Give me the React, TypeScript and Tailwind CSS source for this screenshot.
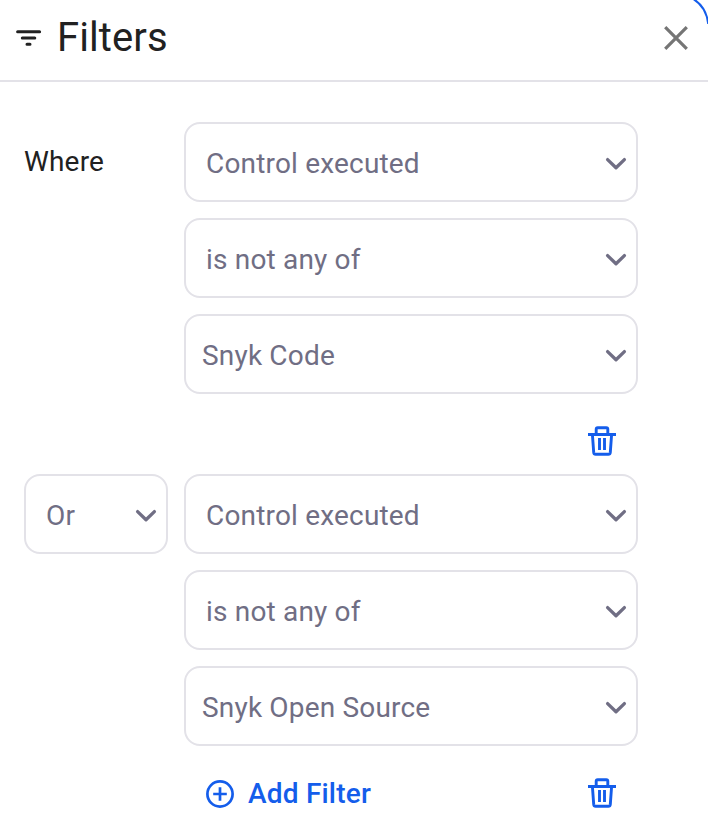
import React from "react";

function Chevron() {
  return (
    <svg width="24" height="16" viewBox="0 0 24 16" fill="none" className="shrink-0">
      <path d="M3.600 3.600 12 11.800l8.400-8.200" stroke="#706e84" strokeWidth="3.300" strokeLinecap="round" strokeLinejoin="round" />
    </svg>
  );
}

function Select({ label, tight = false }: { label: string; tight?: boolean }) {
  return (
    <div className={`flex h-20 w-full items-center justify-between rounded-2xl border-2 border-[#e3e2e8] bg-white pr-2 pt-1 ${tight ? "pl-4" : "pl-5"}`}>
      <span className="text-[28px] leading-8 tracking-[0.18px] text-[#706e84]">{label}</span>
      <Chevron />
    </div>
  );
}

function Trash() {
  return (
    <svg width="28" height="30" viewBox="0 0 28 30" fill="none" stroke="#145deb" strokeWidth="2.900" strokeLinejoin="round">
      <path d="M0 8.500h28M8.200 8V3.200q0-1.500 1.500-1.500h8.600q1.500 0 1.500 1.500V8M4.400 8.500l1.300 17.900q.2 1.900 2 1.900h12.600q1.800 0 2-1.900l1.300-17.900M11.500 12v12M16.500 12v12" />
    </svg>
  );
}

export default function App() {
  return (
    <main className="relative h-[830px] w-[708px] overflow-hidden bg-white font-['Roboto',sans-serif]">
      <svg className="absolute right-0 top-0" width="24" height="32" viewBox="0 0 24 32" fill="none">
        <path d="M9 -1.200Q22.500 7 24.200 24" stroke="#145deb" strokeWidth="2" />
      </svg>
      <header className="flex h-[82px] items-center justify-between border-b-2 border-[#e3e2e8] pb-1 pl-4 pr-5">
        <div className="flex items-center gap-[15px]">
          <svg width="26" height="18" viewBox="0 0 26 18" fill="none" stroke="#212121" strokeWidth="3" strokeLinecap="round"><path d="M1.600 2.700h22M6.300 9h12.500M11 15.200h3" /></svg>
          <h1 className="text-[40px] leading-[48px] tracking-[0.1px] text-[#212121]">Filters</h1>
        </div>
        <svg width="24" height="24" viewBox="0 0 24 24" stroke="#757575" strokeWidth="3.200"><path d="m1.200 1.200 21.600 21.600M22.800 1.200 1.200 22.800" /></svg>
      </header>
      <section className="grid grid-cols-[144px_454px] gap-x-4 pl-6 pt-10">
        <div className="pt-6 text-[28px] leading-8 tracking-[0.18px] text-[#212121]">Where</div>
        <div className="flex flex-col gap-4">
          <Select label="Control executed" />
          <Select label="is not any of" />
          <Select label="Snyk Code" tight />
        </div>
      </section>
      <div className="flex h-20 items-center justify-end pr-[92px] pt-3.5"><Trash /></div>
      <section className="grid grid-cols-[144px_454px] gap-x-4 pl-6">
        <div><Select label="Or" /></div>
        <div className="flex flex-col gap-4">
          <Select label="Control executed" />
          <Select label="is not any of" />
          <Select label="Snyk Open Source" tight />
        </div>
      </section>
      <footer className="flex h-[84px] items-start justify-between pl-[206px] pr-[92px] pt-[27px]">
        <button className="flex items-center gap-3.5 text-[28px] font-medium leading-[42px] tracking-[0.2px] text-[#145deb]">
          <svg width="28" height="28" viewBox="0 0 28 28" fill="none" stroke="currentColor" strokeWidth="2.700"><circle cx="14" cy="14" r="12.600" /><path d="M14 7.200v13.600M7.200 14h13.600" /></svg>
          Add Filter
        </button>
        <div className="pt-[5px]"><Trash /></div>
      </footer>
    </main>
  );
}
